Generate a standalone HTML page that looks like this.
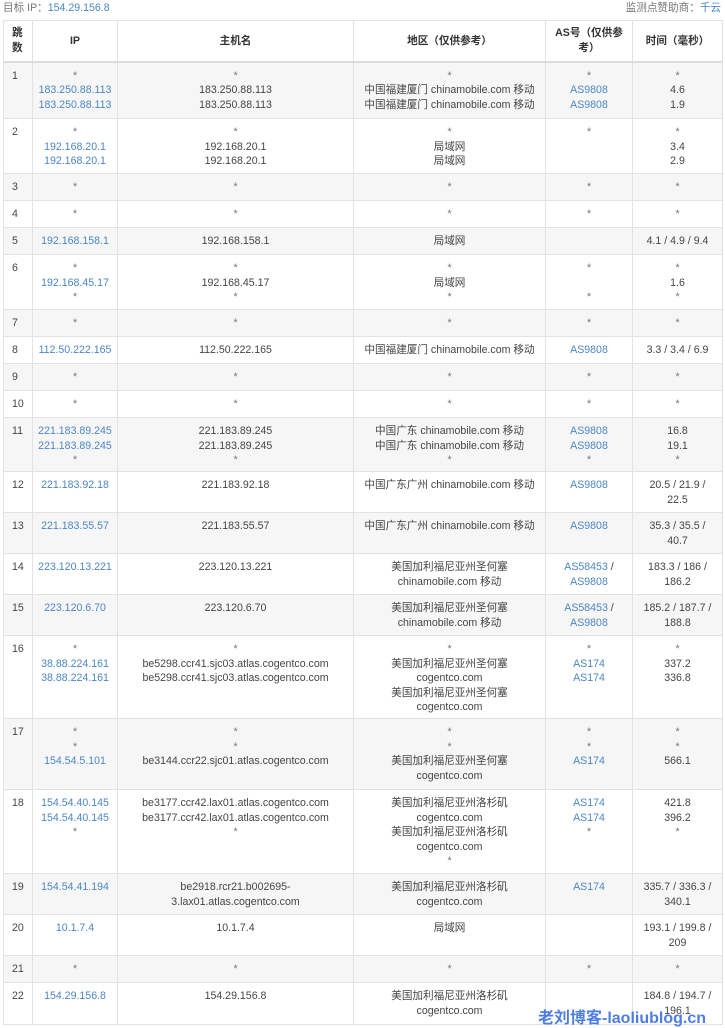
<!DOCTYPE html>
<html><head><meta charset="utf-8"><style>
body{margin:0;background:#fff;font-family:"Liberation Sans","Noto Sans CJK SC",sans-serif;font-size:10.6px;color:#444;width:725px;height:1024px;overflow:hidden;position:relative}
.top{height:20px;line-height:17px;padding:0 3px;color:#777;position:relative}
.top .r{position:absolute;right:4px;top:0}
a,.b{color:#4a86c5;text-decoration:none}
table{position:absolute;left:3px;top:20px;width:719px;border-collapse:collapse;table-layout:fixed}
td,th{border:1px solid #e2e2e2;vertical-align:top;text-align:center;padding:6px 3px 0;line-height:14.5px;overflow:hidden}
th{font-weight:bold;vertical-align:middle;padding:0 3px;border-bottom:2px solid #ddd;color:#333}
td:first-child,th:first-child{text-align:left;padding-left:8px}
tr:nth-child(odd) td{background:#f6f6f6}
.s{color:#777}
.wm{position:absolute;left:538px;top:1004px;font-size:16px;font-weight:bold;color:#3b6fe0;white-space:nowrap;opacity:.9}
</style></head><body>
<div class="top">目标 IP：<span class="b">154.29.156.8</span><span class="r">监测点赞助商：<span class="b">千云</span></span></div>
<table>
<colgroup><col style="width:29px"><col style="width:85px"><col style="width:236px"><col style="width:192px"><col style="width:87px"><col style="width:90px"></colgroup>
<thead><tr style="height:41px"><th style="text-align:left">跳<br>数</th><th>IP</th><th>主机名</th><th>地区（仅供参考）</th><th>AS号（仅供参考）</th><th>时间（毫秒）</th></tr></thead>
<tbody>
<tr style="height:57px"><td>1</td><td><span class="s">*</span><br><a>183.250.88.113</a><br><a>183.250.88.113</a></td><td><span class="s">*</span><br>183.250.88.113<br>183.250.88.113</td><td><span class="s">*</span><br>中国福建厦门 chinamobile.com 移动<br>中国福建厦门 chinamobile.com 移动</td><td><span class="s">*</span><br><a>AS9808</a><br><a>AS9808</a></td><td><span class="s">*</span><br>4.6<br>1.9</td></tr>
<tr style="height:55px"><td>2</td><td><span class="s">*</span><br><a>192.168.20.1</a><br><a>192.168.20.1</a></td><td><span class="s">*</span><br>192.168.20.1<br>192.168.20.1</td><td><span class="s">*</span><br>局域网<br>局域网</td><td><span class="s">*</span></td><td><span class="s">*</span><br>3.4<br>2.9</td></tr>
<tr style="height:27px"><td>3</td><td class="s">*</td><td class="s">*</td><td class="s">*</td><td class="s">*</td><td class="s">*</td></tr>
<tr style="height:27px"><td>4</td><td class="s">*</td><td class="s">*</td><td class="s">*</td><td class="s">*</td><td class="s">*</td></tr>
<tr style="height:27px"><td>5</td><td><a>192.168.158.1</a></td><td>192.168.158.1</td><td>局域网</td><td></td><td>4.1 / 4.9 / 9.4</td></tr>
<tr style="height:55px"><td>6</td><td><span class="s">*</span><br><a>192.168.45.17</a><br><span class="s">*</span></td><td><span class="s">*</span><br>192.168.45.17<br><span class="s">*</span></td><td><span class="s">*</span><br>局域网<br><span class="s">*</span></td><td><span class="s">*</span><br><br><span class="s">*</span></td><td><span class="s">*</span><br>1.6<br><span class="s">*</span></td></tr>
<tr style="height:27px"><td>7</td><td class="s">*</td><td class="s">*</td><td class="s">*</td><td class="s">*</td><td class="s">*</td></tr>
<tr style="height:27px"><td>8</td><td><a>112.50.222.165</a></td><td>112.50.222.165</td><td>中国福建厦门 chinamobile.com 移动</td><td><a>AS9808</a></td><td>3.3 / 3.4 / 6.9</td></tr>
<tr style="height:27px"><td>9</td><td class="s">*</td><td class="s">*</td><td class="s">*</td><td class="s">*</td><td class="s">*</td></tr>
<tr style="height:27px"><td>10</td><td class="s">*</td><td class="s">*</td><td class="s">*</td><td class="s">*</td><td class="s">*</td></tr>
<tr style="height:54px"><td>11</td><td><a>221.183.89.245</a><br><a>221.183.89.245</a><br><span class="s">*</span></td><td>221.183.89.245<br>221.183.89.245<br><span class="s">*</span></td><td>中国广东 chinamobile.com 移动<br>中国广东 chinamobile.com 移动<br><span class="s">*</span></td><td><a>AS9808</a><br><a>AS9808</a><br><span class="s">*</span></td><td>16.8<br>19.1<br><span class="s">*</span></td></tr>
<tr style="height:41px"><td>12</td><td><a>221.183.92.18</a></td><td>221.183.92.18</td><td>中国广东广州 chinamobile.com 移动</td><td><a>AS9808</a></td><td>20.5 / 21.9 /<br>22.5</td></tr>
<tr style="height:41px"><td>13</td><td><a>221.183.55.57</a></td><td>221.183.55.57</td><td>中国广东广州 chinamobile.com 移动</td><td><a>AS9808</a></td><td>35.3 / 35.5 /<br>40.7</td></tr>
<tr style="height:41px"><td>14</td><td><a>223.120.13.221</a></td><td>223.120.13.221</td><td>美国加利福尼亚州圣何塞<br>chinamobile.com 移动</td><td><a>AS58453</a> /<br><a>AS9808</a></td><td>183.3 / 186 /<br>186.2</td></tr>
<tr style="height:41px"><td>15</td><td><a>223.120.6.70</a></td><td>223.120.6.70</td><td>美国加利福尼亚州圣何塞<br>chinamobile.com 移动</td><td><a>AS58453</a> /<br><a>AS9808</a></td><td>185.2 / 187.7 /<br>188.8</td></tr>
<tr style="height:83px"><td>16</td><td><span class="s">*</span><br><a>38.88.224.161</a><br><a>38.88.224.161</a></td><td><span class="s">*</span><br>be5298.ccr41.sjc03.atlas.cogentco.com<br>be5298.ccr41.sjc03.atlas.cogentco.com</td><td><span class="s">*</span><br>美国加利福尼亚州圣何塞<br>cogentco.com<br>美国加利福尼亚州圣何塞<br>cogentco.com</td><td><span class="s">*</span><br><a>AS174</a><br><a>AS174</a></td><td><span class="s">*</span><br>337.2<br>336.8</td></tr>
<tr style="height:71px"><td>17</td><td><span class="s">*</span><br><span class="s">*</span><br><a>154.54.5.101</a></td><td><span class="s">*</span><br><span class="s">*</span><br>be3144.ccr22.sjc01.atlas.cogentco.com</td><td><span class="s">*</span><br><span class="s">*</span><br>美国加利福尼亚州圣何塞<br>cogentco.com</td><td><span class="s">*</span><br><span class="s">*</span><br><a>AS174</a></td><td><span class="s">*</span><br><span class="s">*</span><br>566.1</td></tr>
<tr style="height:84px"><td>18</td><td><a>154.54.40.145</a><br><a>154.54.40.145</a><br><span class="s">*</span></td><td>be3177.ccr42.lax01.atlas.cogentco.com<br>be3177.ccr42.lax01.atlas.cogentco.com<br><span class="s">*</span></td><td>美国加利福尼亚州洛杉矶<br>cogentco.com<br>美国加利福尼亚州洛杉矶<br>cogentco.com<br><span class="s">*</span></td><td><a>AS174</a><br><a>AS174</a><br><span class="s">*</span></td><td>421.8<br>396.2<br><span class="s">*</span></td></tr>
<tr style="height:41px"><td>19</td><td><a>154.54.41.194</a></td><td>be2918.rcr21.b002695-<br>3.lax01.atlas.cogentco.com</td><td>美国加利福尼亚州洛杉矶<br>cogentco.com</td><td><a>AS174</a></td><td>335.7 / 336.3 /<br>340.1</td></tr>
<tr style="height:41px"><td>20</td><td><a>10.1.7.4</a></td><td>10.1.7.4</td><td>局域网</td><td></td><td>193.1 / 199.8 /<br>209</td></tr>
<tr style="height:27px"><td>21</td><td class="s">*</td><td class="s">*</td><td class="s">*</td><td class="s">*</td><td class="s">*</td></tr>
<tr style="height:42px"><td>22</td><td><a>154.29.156.8</a></td><td>154.29.156.8</td><td>美国加利福尼亚州洛杉矶<br>cogentco.com</td><td></td><td>184.8 / 194.7 /<br>196.1</td></tr>
</tbody></table>
<div class="wm">老刘博客-laoliublog.cn</div>
</body></html>
